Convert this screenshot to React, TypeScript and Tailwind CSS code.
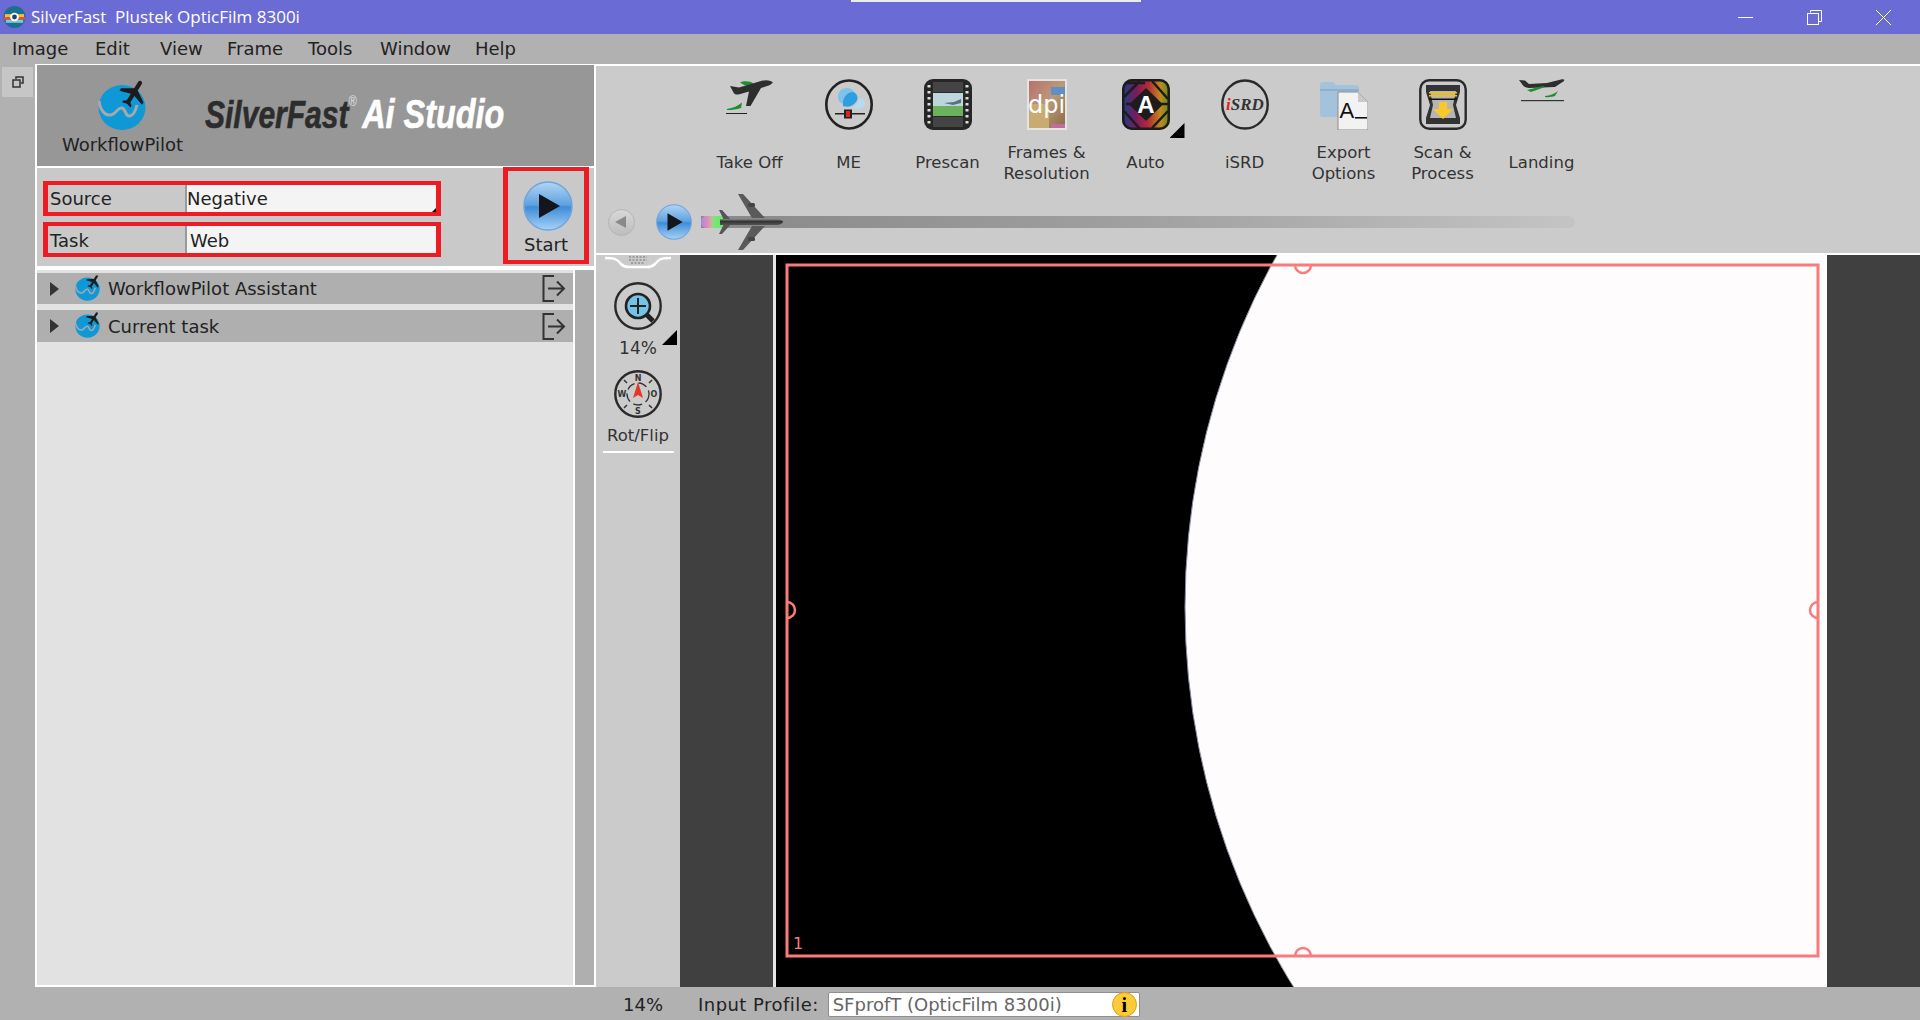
import type { ReactNode } from 'react'

const FLIGHT = 'M21 16v-2l-8-5V3.500c0-.83-.67-1.500-1.500-1.500S10 2.670 10 3.500V9l-8 5v2l8-2.500V19l-2 1.500V22l3.500-1 3.500 1v-1.500L13 19v-5.500l8 2.500z'

const menus = [
  { label: 'Image', cls: 'w-[83px]' },
  { label: 'Edit', cls: 'w-[65px]' },
  { label: 'View', cls: 'w-[67px]' },
  { label: 'Frame', cls: 'w-[81px]' },
  { label: 'Tools', cls: 'w-[72px]' },
  { label: 'Window', cls: 'w-[95px]' },
  { label: 'Help', cls: 'w-[60px]' },
]

function Globe({ w, h }: { w: number; h: number }) {
  return (
    <svg width={w} height={h} viewBox="0 0 52 51">
      <ellipse cx="24" cy="28.500" rx="23.500" ry="22.500" fill="#0f98d6" />
      <path d="M1 22c1 9 6 15 12 14 6-1 6-8 11-7 4 1 3 9 8 8 4-1 6-7 7-11" fill="none" stroke="#a4a9ad" strokeWidth="3" />
      <g transform="translate(19 -3) rotate(32 16 18) scale(1.400)">
        <path d={FLIGHT} fill="#1c1c1c" />
      </g>
    </svg>
  )
}

function PlayBall({ size }: { size: number }) {
  return (
    <svg width={size} height={size} viewBox="0 0 50 50">
      <defs>
        <linearGradient id="ball" x1="0" y1="0" x2="0" y2="1">
          <stop offset="0" stopColor="#b4d4f2" />
          <stop offset="0.48" stopColor="#5da2e2" />
          <stop offset="0.52" stopColor="#3f8cd8" />
          <stop offset="1" stopColor="#a6d2f5" />
        </linearGradient>
      </defs>
      <circle cx="25" cy="25" r="24" fill="url(#ball)" stroke="#6fa5dc" strokeWidth="1.500" />
      <path d="M16 13 L37 25 L16 37 Z" fill="#15151c" />
    </svg>
  )
}

function TakeOffIcon() {
  return (
    <svg width="48" height="36" viewBox="0 0 48 36">
      <path d="M14 3.500c3-1.500 7-1.500 11-.5l3 2-9 1.500z" fill="#1e8f2e" />
      <path d="M47 3.500C44 .8 39 .8 35 2L13 8.500 4 7l3.500 6.500c1 2 3 2.500 6 1.700L23 12.500 20 27h4.500L35 9l9-3z" fill="#2e2e2e" />
      <path d="M1 30c6-1 11-3 15-6.500L15 29c-4 1.500-9 2-14 2z" fill="#1e8f2e" />
      <rect x="0" y="34" width="21" height="1" fill="#222" />
    </svg>
  )
}

function MeIcon() {
  return (
    <svg width="48" height="51" viewBox="0 0 48 51">
      <ellipse cx="24" cy="25.500" rx="22.700" ry="24" fill="none" stroke="#222" strokeWidth="2.600" />
      <path d="M14 22c-3-7 1-13 8-13 6 0 9 5 7 9-3 6-12 9-15 4z" fill="#7fc2ea" />
      <path d="M18 27c-1-8 4-14 10-14 4 1 6 6 3 10-3 4-8 6-13 4z" fill="#2d9fe0" />
      <path d="M26 29c5-1 8-6 8-10 4 1 7 4 6 7-1 3-9 5-14 3z" fill="#b5dcf3" />
      <rect x="10" y="34" width="11" height="1.500" fill="#222" />
      <rect x="27" y="34" width="13" height="1.500" fill="#222" />
      <rect x="19" y="30.500" width="8" height="9" fill="#222" />
      <rect x="21" y="32" width="4" height="6" fill="#e2231a" />
    </svg>
  )
}

function PrescanIcon() {
  return (
    <svg width="48" height="51" viewBox="0 0 48 51">
      <rect width="48" height="51" rx="9" fill="#262626" />
      <rect x="9" y="3" width="30" height="10" fill="#444" />
      <rect x="9" y="38" width="30" height="10" fill="#444" />
      <rect x="8" y="13" width="32" height="25" fill="#2a2a2a" />
      <rect x="9" y="14" width="30" height="13" fill="#bcd6dc" />
      <path d="M20 24l10-1 7-3v4l-8 2z" fill="#5b6f80" />
      <rect x="9" y="27" width="30" height="10" fill="#6ab35c" />
      {[6, 12, 18, 24, 30, 36, 42].map((y) => (
        <g key={y} fill="#ddd">
          <rect x="3.500" y={y} width="3" height="2.500" />
          <rect x="41.500" y={y} width="3" height="2.500" />
        </g>
      ))}
    </svg>
  )
}

function FramesIcon() {
  return (
    <div className="relative w-[40px] h-[51px] border-2 border-[#e4e4e4] bg-gradient-to-br from-[#b8716c] via-[#b99a7a] to-[#8d6a45] overflow-hidden">
      <div className="absolute right-0 top-[6px] w-[14px] h-[8px] bg-[#5f8fc5]" />
      <div className="absolute left-0 bottom-0 w-[20px] h-[24px] bg-[#c9ab72]" />
      <div className="absolute right-0 bottom-0 w-[14px] h-[4px] bg-[#c26c9d]" />
      <div className="absolute inset-0 flex items-center justify-center text-white text-[24px] leading-none">dpi</div>
    </div>
  )
}

function AutoIcon() {
  return (
    <div className="relative w-[48px] h-[51px]">
      <svg width="48" height="51" viewBox="0 0 48 51">
        <defs>
          <linearGradient id="spec" x1="0" y1="0" x2="1" y2="0">
            <stop offset="0" stopColor="#1a3f88" />
            <stop offset="0.3" stopColor="#7b1a5c" />
            <stop offset="0.55" stopColor="#b52b35" />
            <stop offset="0.8" stopColor="#bd8a1e" />
            <stop offset="1" stopColor="#5f8a20" />
          </linearGradient>
        </defs>
        <rect width="48" height="51" rx="10" fill="url(#spec)" />
        <g stroke="#1c1c1c" strokeWidth="2.500" fill="none">
          <rect x="1.300" y="1.300" width="45.400" height="48.400" rx="9" />
          <path d="M4 4l19 0M30 2L46 20M46 32L30 49M2 32l16 18M2 18L18 2M4 25h8M36 25h10" />
        </g>
        <path d="M24 9L41 25.500 24 42 7 25.500z" fill="#1c1c1c" />
        <text x="24" y="34" textAnchor="middle" fill="#fff" fontSize="24" fontWeight="700" fontFamily="Liberation Sans, sans-serif">A</text>
      </svg>
      <div className="absolute left-[48px] top-[44px] w-[15px] h-[15px] bg-black [clip-path:polygon(100%_0,100%_100%,0_100%)]" />
    </div>
  )
}

function IsrdIcon() {
  return (
    <svg width="48" height="51" viewBox="0 0 48 51">
      <ellipse cx="24" cy="25.500" rx="22.700" ry="24" fill="none" stroke="#2a2a2a" strokeWidth="2.400" />
      <text x="24" y="31" textAnchor="middle" fontSize="17" fontWeight="700" fontStyle="italic" fontFamily="Liberation Serif, serif" fill="#333">
        <tspan fill="#e2231a">i</tspan>SRD
      </text>
    </svg>
  )
}

function ExportIcon() {
  return (
    <svg width="48" height="51" viewBox="0 0 48 51">
      <path d="M0 6c0-2 1-3 3-3h10l3 3h20c2 0 3 1 3 3v29H2c-1 0-2-1-2-2z" fill="#a5c2dc" />
      <path d="M0 10h39v2H0z" fill="#8fb0cd" />
      <path d="M18 13h20l10 10v28H18z" fill="#f2f2f2" stroke="#8b8b8b" />
      <path d="M38 13v10h10z" fill="#c9c9c9" />
      <text x="19.500" y="39" fontSize="22" fontFamily="Liberation Sans, sans-serif" fill="#111">A</text>
      <rect x="35" y="38" width="12" height="1.600" fill="#111" />
    </svg>
  )
}

function ScanIcon() {
  return (
    <svg width="48" height="51" viewBox="0 0 48 51">
      <rect x="1.300" y="1.300" width="45.400" height="48.400" rx="9" fill="none" stroke="#2a2a2a" strokeWidth="2.400" />
      <path d="M7 6h34v7l-4 13 4 13v6H7v-6l4-13-4-13z" fill="#333" />
      <path d="M11 12h26l-3 14 3 13H11l3-13z" fill="#b5b5b5" />
      <rect x="10" y="13" width="28" height="1.500" fill="#f1c21b" />
      <rect x="10" y="16" width="28" height="1.500" fill="#f1c21b" />
      <rect x="10" y="19.500" width="28" height="1.500" fill="#111" />
      <path d="M20 23h8v7h6L24 40 14 30h6z" fill="#fbc82b" />
    </svg>
  )
}

function LandingIcon() {
  return (
    <svg width="46" height="24" viewBox="0 0 46 24">
      <path d="M0 1l6 .5 4 3.500L28 4l14-3.500c2-.5 4 0 3 1.500l-9 6-26 1C7 9 4 7 3 5z" fill="#2e2e2e" />
      <path d="M8 11l16-4 2 1-14 5z" fill="#1e8f2e" />
      <path d="M26 17c5-.5 9-2 13-5l-3 5c-3 1-6 1.500-10 1z" fill="#1e8f2e" />
      <rect x="2" y="21" width="43" height="1.200" fill="#333" />
    </svg>
  )
}

function BigPlane() {
  return (
    <svg width="66" height="56" viewBox="0 0 66 56">
      <defs>
        <linearGradient id="hull" x1="0" y1="0" x2="0" y2="1">
          <stop offset="0" stopColor="#8a8a8a" />
          <stop offset="0.4" stopColor="#333" />
          <stop offset="1" stopColor="#555" />
        </linearGradient>
      </defs>
      <path d="M20 0h5l22 24H34zM20 56h5l22-24H34z" fill="#5a5a5a" />
      <path d="M1 16l3 0 9 10H6zM1 40l3 0 9-10H6z" fill="#555" />
      <rect x="30" y="9" width="7" height="4" rx="1.500" fill="#444" />
      <rect x="30" y="43" width="7" height="4" rx="1.500" fill="#444" />
      <path d="M2 25h56c4 0 7 1.500 7 3s-3 3-7 3H2z" fill="url(#hull)" />
    </svg>
  )
}

function ZoomIcon() {
  return (
    <svg width="48" height="48" viewBox="0 0 48 48">
      <circle cx="24" cy="24" r="22.700" fill="none" stroke="#2a2a2a" strokeWidth="2.400" />
      <circle cx="24" cy="24" r="12" fill="#74c2e8" stroke="#222" strokeWidth="2.600" />
      <path d="M24 16v16M16 24h16" stroke="#222" strokeWidth="2" />
      <path d="M33 33l6 6" stroke="#222" strokeWidth="5" />
    </svg>
  )
}

function CompassIcon() {
  const label = { fontSize: 8, fontWeight: 700, fill: '#333', textAnchor: 'middle' as const, fontFamily: 'DejaVu Sans, sans-serif' }
  return (
    <svg width="48" height="48" viewBox="0 0 48 48">
      <circle cx="24" cy="24" r="22.700" fill="none" stroke="#2a2a2a" strokeWidth="2.400" />
      <circle cx="24" cy="24" r="11" fill="none" stroke="#333" strokeWidth="1.300" strokeDasharray="9 4" />
      <path d="M10 10l3 3M38 10l-3 3M10 38l3-3M38 38l-3-3" stroke="#333" strokeWidth="1.500" />
      <text x="24" y="11" {...label}>N</text>
      <text x="24" y="44" {...label}>S</text>
      <text x="8" y="27" {...label}>W</text>
      <text x="40" y="27" {...label}>O</text>
      <path d="M24 12l5 16-5-3-5 3z" fill="#e8352a" />
    </svg>
  )
}

function PanelExit() {
  return (
    <svg width="24" height="27" viewBox="0 0 24 27" fill="none" stroke="#333" strokeWidth="2">
      <path d="M12 1H1.500v25H12" />
      <path d="M6 13.500h16M15 6.500l7 7-7 7" />
    </svg>
  )
}

function AccordionRow({ title, cls }: { title: string; cls: string }) {
  return (
    <div className={`flex items-center bg-[#afafaf] ${cls}`}>
      <div className="ml-[13px] w-0 h-0 border-y-[7px] border-y-transparent border-l-[9px] border-l-[#333]" />
      <div className="ml-[16px] -mt-[3px]">
        <Globe w={27} h={27} />
      </div>
      <span className="ml-[6px] text-[18px] text-[#222]">{title}</span>
      <div className="ml-auto mr-[7px]">
        <PanelExit />
      </div>
    </div>
  )
}

function ToolItem({ icon, children }: { icon: ReactNode; children: ReactNode }) {
  return (
    <div className="w-[99px] flex flex-col items-center">
      <div className="h-[52px] flex items-start justify-center">{icon}</div>
      <div className="h-[63px] whitespace-nowrap flex items-center justify-center text-center text-[16.500px] leading-[21px] text-[#333]">
        {children}
      </div>
    </div>
  )
}

function FormRow({ label, children, cls }: { label: string; children: ReactNode; cls?: string }) {
  return (
    <div className={`flex w-[398px] h-[35px] border-x-[5px] border-y-[4px] border-[#ed1c24] text-[18px] text-[#222] ${cls ?? ''}`}>
      <div className="w-[139px] pl-[2px] bg-[#c9c9c9] border-r-2 border-[#9a9a9a]">{label}</div>
      <div className="relative flex-1 bg-[#f4f4f4]">{children}</div>
    </div>
  )
}

export default function App() {
  return (
    <div className="w-screen h-screen overflow-hidden flex flex-col bg-[#b1b1b1] font-['DejaVu_Sans',sans-serif]">
      {/* Title bar */}
      <div className="relative h-[34px] shrink-0 flex items-center bg-[#6b6bd6] text-white">
        <div className="absolute left-[851px] top-0 w-[290px] h-[2px] bg-[#ececec]" />
        <svg className="ml-[3px]" width="23" height="24" viewBox="0 0 24 24">
          <circle cx="12" cy="12" r="11.500" fill="#1d6f8f" />
          <path d="M2 9h20v3H2z" fill="#f4c03a" />
          <path d="M1 12h22v3H1z" fill="#d9553f" />
          <path d="M3 15h18v3H3z" fill="#7ec9e8" />
          <circle cx="12" cy="12" r="4.500" fill="#fff" />
          <circle cx="12" cy="12" r="2.500" fill="#16476b" />
        </svg>
        <span className="ml-[5px] text-[17px] font-['Open_Sans',sans-serif] whitespace-pre">SilverFast  Plustek OpticFilm 8300i</span>
        <div className="ml-auto mr-[29px] flex items-center gap-[54px]">
          <svg width="15" height="15" viewBox="0 0 15 15"><path d="M0 7.500h15" stroke="#fff" strokeWidth="1" /></svg>
          <svg width="15" height="15" viewBox="0 0 15 15" fill="none" stroke="#fff">
            <path d="M3.500 2.500V.5h11v11h-2.500" />
            <rect x=".5" y="3.500" width="11" height="11" />
          </svg>
          <svg width="15" height="15" viewBox="0 0 15 15"><path d="M0 0l15 15M15 0L0 15" stroke="#fff" strokeWidth="1" /></svg>
        </div>
      </div>

      {/* Menu */}
      <div className="h-[30px] shrink-0 flex items-center pl-[12px] pb-[2px] text-[18px] text-[#222]">
        {menus.map((m) => (
          <span key={m.label} className={m.cls}>{m.label}</span>
        ))}
      </div>

      <div className="flex-1 min-h-0 flex">
        {/* Dock strip */}
        <div className="w-[35px] shrink-0 pl-[2px] pt-[3px]">
          <div className="w-[31px] h-[30px] bg-[#c6c6c6] flex items-center justify-center">
            <svg width="12" height="12" viewBox="0 0 12 12" fill="none" stroke="#333" strokeWidth="1.500">
              <path d="M4 3V1h7v6H9" />
              <rect x="1" y="4" width="7" height="7" />
            </svg>
          </div>
        </div>

        {/* Left panel */}
        <div className="w-[561px] shrink-0 flex flex-col border-x-2 border-t border-b-2 border-white bg-white">
          <div className="h-[101px] shrink-0 flex bg-[#979797]">
            <div className="w-[171px] shrink-0 flex flex-col items-center pt-[14px]">
              <div className="ml-[3px]"><Globe w={52} h={51} /></div>
              <span className="mt-[4px] text-[18px] leading-[22px] text-[#222]">WorkflowPilot</span>
            </div>
            <div className="self-center -mt-[3px] -ml-[3px] origin-left scale-x-[0.79] whitespace-nowrap font-['Liberation_Sans',sans-serif] italic font-bold text-[38px] leading-none [-webkit-text-stroke:0.6px]">
              <span className="text-[#2c2c2c]">SilverFast</span>
              <span className="align-top text-[14px] font-normal text-[#e4e4e4] [-webkit-text-stroke:0px]">®</span>
              <span className="ml-[7px] text-[41px] text-white">Ai Studio</span>
            </div>
          </div>

          <div className="h-[98px] shrink-0 mt-[2px] flex bg-[#c9c9c9]">
            <div className="pl-[6px] pt-[13px] flex flex-col gap-[6px]">
              <FormRow label="Source">
                Negative
                <div className="absolute right-0 bottom-0 w-[4px] h-[4px] bg-black [clip-path:polygon(100%_0,100%_100%,0_100%)]" />
              </FormRow>
              <FormRow label="Task" cls="leading-[30px]">
                <span className="pl-[3px]">Web</span>
              </FormRow>
            </div>
            <div className="ml-[62px] -mt-px w-[86px] h-[97px] border-x-[5px] border-y-[4px] border-[#ed1c24] flex flex-col items-center pt-[10px]">
              <div className="ml-[3px]"><PlayBall size={50} /></div>
              <span className="mt-[2px] text-[18px] leading-[24px] text-[#222]">Start</span>
            </div>
          </div>

          <div className="flex-1 min-h-0 mt-[4px] flex bg-[#e2e2e2]">
            <div className="flex-1 pt-[3px] flex flex-col gap-[6px]">
              <AccordionRow title="WorkflowPilot Assistant" cls="h-[31px]" />
              <AccordionRow title="Current task" cls="h-[32px]" />
            </div>
            <div className="w-[21px] shrink-0 bg-[#afafaf] border-l-2 border-white" />
          </div>
        </div>

        {/* Right side */}
        <div className="flex-1 min-w-0 flex flex-col">
          <div className="h-[189px] shrink-0 border-t-2 border-white bg-[#cbcbcb]">
            <div className="flex pl-[104px] pt-[13px]">
              <ToolItem icon={<TakeOffIcon />}>Take Off</ToolItem>
              <ToolItem icon={<MeIcon />}>ME</ToolItem>
              <ToolItem icon={<PrescanIcon />}>Prescan</ToolItem>
              <ToolItem icon={<FramesIcon />}>Frames &<br />Resolution</ToolItem>
              <ToolItem icon={<AutoIcon />}>Auto</ToolItem>
              <ToolItem icon={<IsrdIcon />}>iSRD</ToolItem>
              <ToolItem icon={<ExportIcon />}>Export<br />Options</ToolItem>
              <ToolItem icon={<ScanIcon />}>Scan &<br />Process</ToolItem>
              <ToolItem icon={<LandingIcon />}>Landing</ToolItem>
            </div>
            <div className="h-[56px] flex items-center pl-[12px]">
              <div className="w-[27px] h-[27px] rounded-full border border-[#b5b5b5] bg-gradient-to-b from-[#d8d8d8] to-[#bdbdbd] flex items-center justify-center">
                <div className="mr-[2px] w-0 h-0 border-y-[6px] border-y-transparent border-r-[11px] border-r-[#8a8a8a]" />
              </div>
              <div className="ml-[21px]">
                <PlayBall size={36} />
              </div>
              <div className="relative ml-[9px] w-[874px] h-[12px] rounded-r-full bg-gradient-to-r from-[#888888] via-[#a0a0a0] to-[#c4c4c4]">
                <div className="absolute left-0 top-0 w-[22px] h-[12px] rounded-l-[5px] bg-gradient-to-r from-[#a98ad8] via-[#e08ab8] via-30% to-[#6ee86e] to-65%" />
                <div className="absolute left-[17px] -top-[22px]">
                  <BigPlane />
                </div>
              </div>
            </div>
          </div>

          <div className="flex-1 min-h-0 flex border-t-2 border-white bg-[#404040]">
            {/* Zoom / rotate tools */}
            <div className="w-[84px] shrink-0 flex flex-col items-center bg-[#cbcbcb]">
              <svg width="66" height="15" viewBox="0 0 66 15" fill="none">
                <path d="M0 3c10 0 12 1 16 6 2 2 4 3 8 3h18c4 0 6-1 8-3 4-5 6-6 16-6" stroke="#fff" strokeWidth="2.500" />
                <path d="M24 2h18M24 5h18M26 8h14" stroke="#8f8f8f" strokeWidth="1.600" strokeDasharray="2 1.500" />
              </svg>
              <div className="mt-[12px]"><ZoomIcon /></div>
              <div className="relative w-full mt-[7px] flex justify-center text-[17px] leading-[22px] text-[#333]">
                14%
                <div className="absolute left-[66px] -top-[7px] w-[15px] h-[15px] bg-black [clip-path:polygon(100%_0,100%_100%,0_100%)]" />
              </div>
              <div className="mt-[11px]"><CompassIcon /></div>
              <span className="mt-[7px] text-[16.500px] leading-[22px] text-[#333]">Rot/Flip</span>
              <div className="mt-[4px] w-[71px] h-[2px] bg-white" />
            </div>

            <div className="w-[96px] shrink-0 border-r-[3px] border-[#e6e6e6]" />

            {/* Preview */}
            <div className="w-[1051px] shrink-0 bg-black">
              <svg width="1051" height="732" viewBox="0 0 1051 732">
                <circle cx="1129" cy="352" r="720" fill="#fefcfd" stroke="#8a8f9e" strokeWidth="1" />
                <g fill="none" stroke="#f97b7b">
                  <rect x="11" y="10" width="1031" height="691" strokeWidth="3" />
                  <path d="M11 347A8 8 0 0 1 11 363M1042 347A8 8 0 0 0 1042 363M519 10A8 8 0 0 0 535 10M519 701A8 8 0 0 1 535 701" strokeWidth="2.500" />
                </g>
                <text x="17" y="694" fontSize="16" fill="#f97b7b" fontFamily="DejaVu Sans, sans-serif">1</text>
              </svg>
            </div>
          </div>
        </div>
      </div>

      {/* Status bar */}
      <div className="h-[33px] shrink-0 flex items-center pt-[2px] text-[18px] text-[#222]">
        <span className="ml-[623px]">14%</span>
        <span className="ml-[35px] tracking-[0.45px]">Input Profile:</span>
        <div className="ml-[9px] w-[312px] h-[25px] pl-[4px] pr-[2px] flex items-center justify-between rounded-[2px] border border-[#8f8f8f] bg-white text-[#666]">
          <span>SFprofT (OpticFilm 8300i)</span>
          <span className="w-[25px] h-[25px] rounded-full border border-[#e89b12] bg-[#fbcc3a] flex items-center justify-center font-['Liberation_Serif',serif] font-bold text-[20px] text-black">i</span>
        </div>
      </div>
    </div>
  )
}
